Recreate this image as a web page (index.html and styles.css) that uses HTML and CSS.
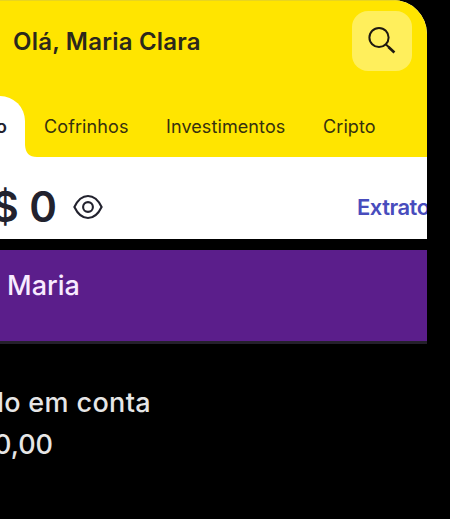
FILE: index.html
```html
<!DOCTYPE html>
<html lang="pt-BR">

<head>
    <meta charset="UTF-8">
    <meta name="viewport" content="width=device-width, initial-scale=1.0">
    <title>Contas</title>
    <link rel="stylesheet" href="styles.css">
</head>

<body>
    <section class="yellow-app">
        <header class="app-header">
            <div class="greeting-row">
                <h1 class="greeting">Olá, Maria Clara</h1>
                <button class="search-btn" aria-label="Buscar">
                    <svg width="30" height="30" viewBox="0 0 30 30" fill="none" stroke="#1f1a10" stroke-width="2">
                        <circle cx="12" cy="11.5" r="9.6" />
                        <path d="M18.7 18.2L22 21.3" />
                        <path d="M21.5 21L27.4 26.6" stroke-width="2.7" />
                    </svg>
                </button>
            </div>
            <nav class="tabs">
                <a class="tab tab-active">o</a>
                <svg class="tab-curve" width="12" height="12" viewBox="0 0 12 12">
                    <path d="M0 0C0.5 8 4 12 12 12H0Z" fill="#fff" />
                </svg>
                <a class="tab tab-savings">Cofrinhos</a>
                <a class="tab tab-invest">Investimentos</a>
                <a class="tab tab-crypto">Cripto</a>
            </nav>
        </header>
        <div class="balance">
            <span class="balance-value">$ 0</span>
            <svg class="eye" width="30" height="26" viewBox="0 0 30 26" fill="none" stroke="#22222e" stroke-width="2.1">
                <path d="M1.4 13C5 5.5 10 2 15 2S25 5.5 28.6 13C25 20.5 20 24 15 24S5 20.5 1.4 13Z" />
                <circle cx="15" cy="13" r="4.9" />
            </svg>
            <a class="statement">Extrato</a>
        </div>
    </section>

    <section class="purple-app">
        <div class="purple-header">Maria</div>
        <div class="account">
            <p class="account-label">do em conta</p>
            <p class="account-value">0,00</p>
        </div>
    </section>
</body>

</html>
```
FILE: styles.css
```css
* {
    box-sizing: border-box;
}

body {
    margin: 0;
    width: 450px;
    height: 519px;
    overflow: hidden;
    background: #000;
    font-family: Inter, "Liberation Sans", sans-serif;
}

.yellow-app {
    width: 427px;
    height: 239px;
    overflow: hidden;
    background: #fff;
    border-top-right-radius: 34px;
}

.app-header {
    height: 157px;
    background: #ffe500;
    border-top: 1px solid #e8d520;
}

.greeting-row {
    display: flex;
    justify-content: space-between;
    height: 95px;
    padding: 10px 15px 0 13px;
}

.greeting {
    margin: 17px 0 0;
    font-size: 24px;
    line-height: 28px;
    font-weight: 600;
    letter-spacing: 0.22px;
    color: #2b281c;
    white-space: nowrap;
}

.search-btn {
    display: flex;
    align-items: center;
    justify-content: center;
    width: 60px;
    height: 60px;
    padding: 0;
    border: none;
    border-radius: 16px;
    background: #ffef5c;
}

.tabs {
    display: flex;
    align-items: flex-end;
    height: 61px;
}

.tab {
    height: 61px;
    font-size: 18px;
    line-height: 61px;
    letter-spacing: 0.1px;
    color: #36300f;
    white-space: nowrap;
}

.tab-active {
    display: flex;
    justify-content: flex-end;
    width: 25px;
    padding-right: 18px;
    border-top-right-radius: 26px;
    background: #fff;
    color: #22222e;
    font-weight: 600;
}

.tab-savings {
    width: 122px;
    margin-left: 7px;
}

.tab-invest {
    width: 157px;
}

.balance {
    display: flex;
    align-items: center;
    height: 82px;
    padding-top: 19px;
    padding-bottom: 1px;
}

.balance-value {
    display: flex;
    justify-content: flex-end;
    flex: none;
    width: 57px;
    font-size: 42px;
    font-weight: 600;
    line-height: 50px;
    color: #22222e;
    white-space: pre;
}

.eye {
    flex: none;
    margin-left: 16px;
}

.statement {
    margin-left: 254px;
    font-size: 22px;
    font-weight: 600;
    letter-spacing: -0.5px;
    color: #484cbd;
}

.purple-app {
    width: 427px;
    margin-top: 11px;
    overflow: hidden;
}

.purple-header {
    height: 94px;
    padding: 18px 0 0 7px;
    border-bottom: 3px solid #25202c;
    background: #5b1e8b;
    font-size: 27px;
    line-height: 36px;
    font-weight: 500;
    color: #f8ebff;
}

.account {
    display: flex;
    flex-direction: column;
    padding-top: 38px;
    color: #e6e6e6;
    font-size: 27px;
    line-height: 42px;
    font-weight: 500;
}

.account p {
    display: flex;
    justify-content: flex-end;
    margin: 0;
    white-space: nowrap;
}

.account-label {
    width: 151px;
    letter-spacing: 0.35px;
}

.account-value {
    width: 53px;
}
```
